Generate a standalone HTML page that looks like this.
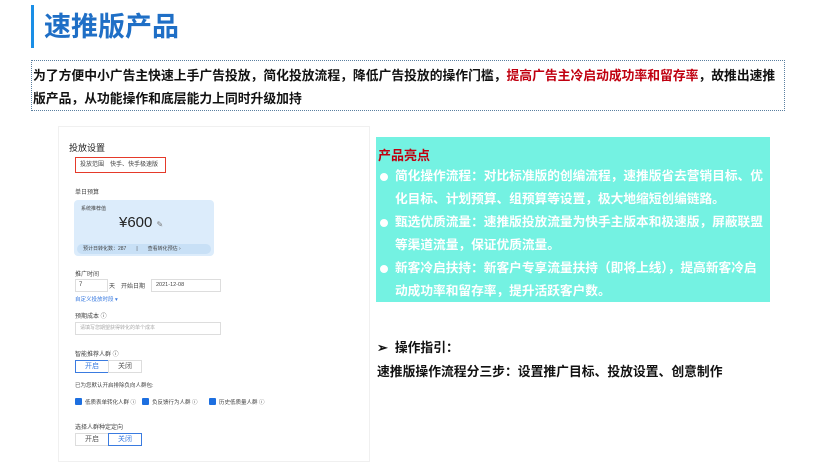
<!DOCTYPE html>
<html><head><meta charset="utf-8"><style>
body{margin:0;width:838px;height:473px;background:#fff;position:relative;overflow:hidden;font-family:"Liberation Sans","Noto Sans CJK SC",sans-serif;}
.a{position:absolute;white-space:nowrap;}
.bar{left:31px;top:5px;width:3px;height:43px;background:#1a8ee6;}
.title{left:44px;top:10px;font-size:27px;font-weight:bold;color:#1f6fc6;line-height:34px;}
.intro{left:31px;top:60px;width:754px;height:51px;border:1px dotted #5a7fa0;box-sizing:border-box;}
.l{font-size:12.8px;font-weight:bold;color:#111;line-height:22px;}
.red{color:#c00010;}
.shot{left:58px;top:126px;width:310px;height:334px;border:1px solid #f0f0f0;background:#fff;font-size:7px;color:#444;}
.shot .a{font-size:7px}
.teal{left:376px;top:137px;width:394px;height:165px;background:#74f2e2;}
.t{font-size:12.7px;font-weight:bold;color:#fff;line-height:22.5px;}
.dot{width:8px;height:8px;border-radius:50%;background:#fff;}
.ck{width:7px;height:7px;background:#1d6fe0;border-radius:1px}
.btn{height:11px;border:1px solid #ddd;font-size:6px;text-align:center;line-height:11px;color:#555}
</style></head><body>
<div class="a bar"></div>
<div class="a title">速推版产品</div>
<div class="a intro"></div>
<div class="a l" style="left:33px;top:65px">为了方便中小广告主快速上手广告投放，简化投放流程，降低广告投放的操作门槛，<span class="red">提高广告主冷启动成功率和留存率</span>，故推出速推</div>
<div class="a l" style="left:33px;top:88px">版产品，从功能操作和底层能力上同时升级加持</div>

<div class="a shot">
 <div class="a" style="left:10px;top:14px;font-size:9px;color:#222">投放设置</div>
 <div class="a" style="left:16px;top:30px;width:85px;height:14px;border:1.5px solid #e53a2a;font-size:6px;line-height:14px;padding-left:4px">投放范围　快手、快手极速版</div>
 <div class="a" style="left:16px;top:60px;font-size:6px">单日预算</div>
 <div class="a" style="left:15px;top:73px;width:140px;height:56px;background:#dcecfb;border-radius:4px"></div>
 <div class="a" style="left:22px;top:78px;font-size:5px">系统推荐值</div>
 <div class="a" style="left:60px;top:87px;font-size:15px;color:#222">¥600 <span style="font-size:8px;color:#777">✎</span></div>
 <div class="a" style="left:18px;top:117px;width:134px;height:10px;background:#c8e0f6;border-radius:5px;font-size:5px;line-height:10px;padding-left:6px;box-sizing:border-box">预计日转化数：287　　|　　查看转化预估 ›</div>
 <div class="a" style="left:16px;top:142px;font-size:6px">推广时间</div>
 <div class="a" style="left:16px;top:152px;width:28px;height:11px;border:1px solid #ddd;font-size:6px;line-height:11px;padding-left:3px">7</div>
 <div class="a" style="left:50px;top:154px;font-size:6px">天　开始日期</div>
 <div class="a" style="left:92px;top:152px;width:64px;height:11px;border:1px solid #ddd;font-size:5.5px;line-height:11px;padding-left:4px">2021-12-08</div>
 <div class="a" style="left:16px;top:168px;font-size:5.5px;color:#3a7be0">自定义投放时段 ▾</div>
 <div class="a" style="left:16px;top:184px;font-size:6px">预期成本 ⓘ</div>
 <div class="a" style="left:16px;top:195px;width:140px;height:11px;border:1px solid #ddd;font-size:5px;line-height:11px;padding-left:4px;color:#aaa">请填写您期望获得转化的单个成本</div>
 <div class="a" style="left:16px;top:222px;font-size:6px">智能推荐人群 ⓘ</div>
 <div class="a btn" style="left:16px;top:233px;width:32px;border-color:#3a7be0;color:#3a7be0">开启</div>
 <div class="a btn" style="left:49px;top:233px;width:32px">关闭</div>
 <div class="a" style="left:16px;top:254px;font-size:5.5px">已为您默认开启排除负向人群包:</div>
 <div class="a ck" style="left:16px;top:271px"></div><div class="a" style="left:26px;top:271px;font-size:5.5px">低质表单转化人群 ⓘ</div>
 <div class="a ck" style="left:83px;top:271px"></div><div class="a" style="left:93px;top:271px;font-size:5.5px">负反馈行为人群 ⓘ</div>
 <div class="a ck" style="left:150px;top:271px"></div><div class="a" style="left:160px;top:271px;font-size:5.5px">历史低质量人群 ⓘ</div>
 <div class="a" style="left:16px;top:295px;font-size:6px">选择人群种定定向</div>
 <div class="a btn" style="left:16px;top:306px;width:32px">开启</div>
 <div class="a btn" style="left:49px;top:306px;width:32px;border-color:#3a7be0;color:#3a7be0">关闭</div>
</div>

<div class="a teal"></div>
<div class="a" style="left:378px;top:145px;font-size:13px;font-weight:bold;color:#c00010">产品亮点</div>
<div class="a dot" style="left:380px;top:173px"></div>
<div class="a dot" style="left:380px;top:219px"></div>
<div class="a dot" style="left:380px;top:265px"></div>
<div class="a t" style="left:395px;top:165px">简化操作流程：对比标准版的创编流程，速推版省去营销目标、优</div>
<div class="a t" style="left:395px;top:188px">化目标、计划预算、组预算等设置，极大地缩短创编链路。</div>
<div class="a t" style="left:395px;top:211px">甄选优质流量：速推版投放流量为快手主版本和极速版，屏蔽联盟</div>
<div class="a t" style="left:395px;top:234px">等渠道流量，保证优质流量。</div>
<div class="a t" style="left:395px;top:257px">新客冷启扶持：新客户专享流量扶持（即将上线），提高新客冷启</div>
<div class="a t" style="left:395px;top:280px">动成功率和留存率，提升活跃客户数。</div>

<div class="a l" style="left:377px;top:337px">➢&nbsp; 操作指引：</div>
<div class="a l" style="left:377px;top:361px">速推版操作流程分三步：设置推广目标、投放设置、创意制作</div>
</body></html>
